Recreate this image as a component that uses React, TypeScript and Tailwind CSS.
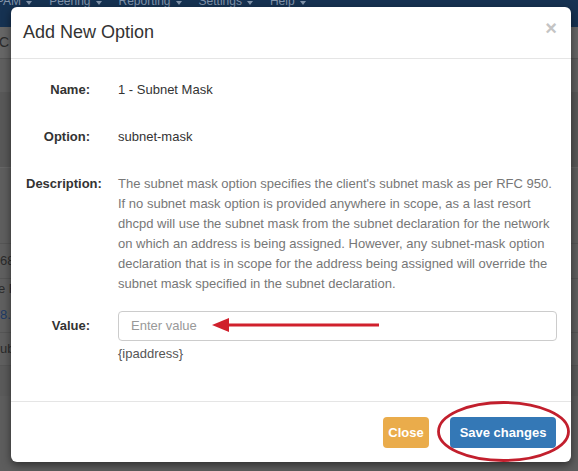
import React from "react";

function Caret() {
  return (
    <svg width="6" height="4" viewBox="0 0 6 4" className="ml-[5px] mb-[3px]">
      <polygon points="0,0 6,0 3,4" fill="#8193aa" />
    </svg>
  );
}

function NavItem({ label, className }: { label: string; className?: string }) {
  return (
    <span className={"flex items-end " + (className ?? "")}>
      {label}
      <Caret />
    </span>
  );
}

function Row({ label, children, className }: { label: string; children: React.ReactNode; className?: string }) {
  return (
    <div className={"flex " + (className ?? "")}>
      <div className="ml-[15px] w-[64px] shrink-0 text-right font-bold whitespace-nowrap">{label}</div>
      <div className="ml-[28px]">{children}</div>
    </div>
  );
}

export default function App() {
  const desc =
    "The subnet mask option specifies the client's subnet mask as per RFC 950. If no subnet mask option is provided anywhere in scope, as a last resort dhcpd will use the subnet mask from the subnet declaration for the network on which an address is being assigned. However, any subnet-mask option declaration that is in scope for the address being assigned will override the subnet mask specified in the subnet declaration.";
  return (
    <div className="relative w-[578px] h-[471px] overflow-hidden bg-[#5d5d5d] font-['Liberation_Sans',Arial,sans-serif]">
      {/* background page */}
      <div className="h-[27px] bg-[#163252] flex items-start text-[#8193aa] text-[12px] leading-[14px]">
        <div className="flex -mt-[6px] -ml-[4px] gap-[17px]">
          <NavItem label="PAM" />
          <NavItem label="Peering" />
          <NavItem label="Reporting" />
          <NavItem label="Settings" />
          <NavItem label="Help" />
        </div>
      </div>
      <div className="flex flex-col text-[13px] text-[#2b2b2b]">
        <div className="h-[32px] bg-[#666] border-b border-[#555] flex items-center text-[14px] -ml-[1px]">C</div>
        <div className="h-[33px] bg-[#5f5f5f]" />
        <div className="h-[76px] bg-[#585858] border-b border-[#666]" />
        <div className="h-[76px] bg-[#5e5e5e] border-b border-[#555]" />
        <div className="h-[35px] bg-[#5f5f5f] border-b border-[#555] flex items-center">68</div>
        <div className="h-[19px] bg-[#5f5f5f] flex items-center -ml-[2px]">e F</div>
        <div className="h-[35px] bg-[#5f5f5f] border-b border-[#555] flex items-center text-[#1d3a66]">8.</div>
        <div className="h-[33px] bg-[#5f5f5f] border-b border-[#555] flex items-center">ub</div>
        <div className="h-[30px] bg-[#5a5a5a]" />
      </div>

      {/* modal */}
      <div className="absolute left-[11px] top-[7px] w-[560px] h-[455px] bg-white rounded-[6px] shadow-[0_3px_9px_rgba(0,0,0,0.5)] flex flex-col text-[#333]">
        <div className="h-[52px] border-b border-[#e5e5e5] flex items-start justify-between pl-[12px] pr-[14px]">
          <h4 className="text-[18px] leading-[20px] mt-[15px]">Add New Option</h4>
          <span className="text-[20px] font-bold leading-none text-[#c4c4c4] mt-[11px]">×</span>
        </div>
        <div className="flex flex-col text-[13px] leading-[20px] h-[342px]">
          <Row label="Name:" className="mt-[21px]">1 - Subnet Mask</Row>
          <Row label="Option:" className="mt-[27px]">subnet-mask</Row>
          <Row label="Description:" className="mt-[27px]">
            <div className="w-[441px] text-[#777]">{desc}</div>
          </Row>
          <div className="flex mt-[17px]">
            <div className="ml-[15px] w-[64px] text-right font-bold leading-[30px]">Value:</div>
            <div className="ml-[28px] flex flex-col">
              <div className="relative w-[439px] h-[30px] border border-[#ccc] rounded-[4px] flex items-center pl-[12px] text-[#999] text-[13px]">
                Enter value
                <svg className="absolute left-[93px] top-[5px]" width="170" height="18" viewBox="0 0 170 18">
                  <line x1="12" y1="8" x2="167" y2="8" stroke="#d0202c" strokeWidth="3" />
                  <polygon points="0,8 17,1 17,15" fill="#d0202c" />
                </svg>
              </div>
              <div className="mt-[3px] text-[#555]">{"{ipaddress}"}</div>
            </div>
          </div>
        </div>
        <div className="flex-1 border-t border-[#e5e5e5] flex items-start justify-end pr-[15px] pt-[15px] gap-[21px]">
          <button className="h-[31px] w-[46px] rounded-[4px] bg-[#eaac4b] text-white text-[13px] font-bold">Close</button>
          <button className="h-[31px] w-[106px] rounded-[4px] bg-[#3478b6] text-white text-[13px] font-bold">Save changes</button>
        </div>
      </div>

      <svg className="absolute left-0 top-0 pointer-events-none" width="578" height="471">
        <ellipse cx="503.5" cy="431.5" rx="65" ry="29" fill="none" stroke="#c21f2d" strokeWidth="2.8" />
      </svg>
    </div>
  );
}
